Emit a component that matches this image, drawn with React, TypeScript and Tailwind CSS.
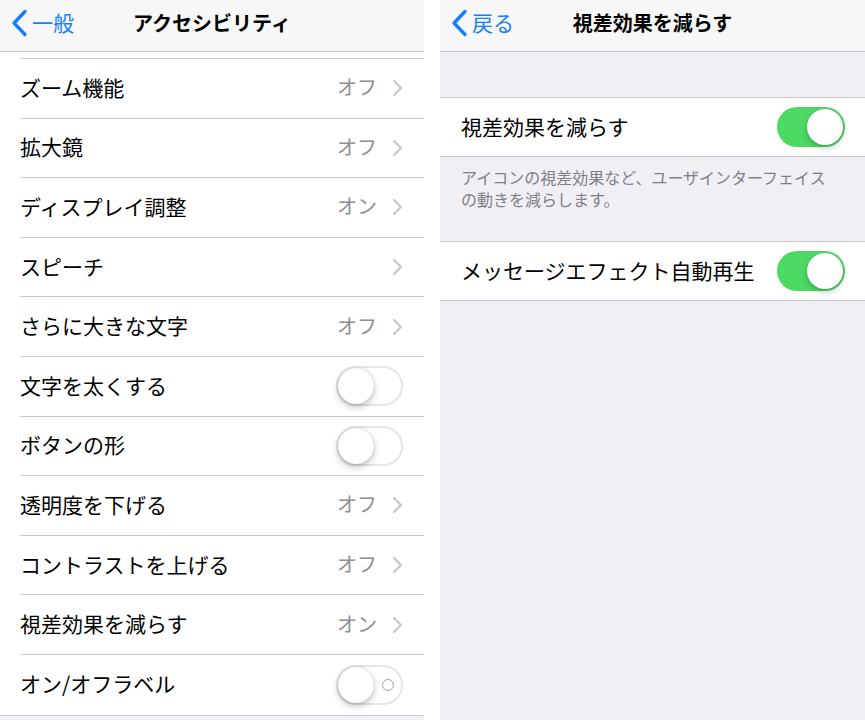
const font = { fontFamily: '"Noto Sans CJK JP", "Noto Sans", sans-serif' }

type Row = { label: string; value?: string; chevron?: boolean; toggle?: 'off' | 'off-label' }

const rows: Row[] = [
  { label: 'ズーム機能', value: 'オフ', chevron: true },
  { label: '拡大鏡', value: 'オフ', chevron: true },
  { label: 'ディスプレイ調整', value: 'オン', chevron: true },
  { label: 'スピーチ', chevron: true },
  { label: 'さらに大きな文字', value: 'オフ', chevron: true },
  { label: '文字を太くする', toggle: 'off' },
  { label: 'ボタンの形', toggle: 'off' },
  { label: '透明度を下げる', value: 'オフ', chevron: true },
  { label: 'コントラストを上げる', value: 'オフ', chevron: true },
  { label: '視差効果を減らす', value: 'オン', chevron: true },
  { label: 'オン/オフラベル', toggle: 'off-label' },
]

function BackChevron() {
  return (
    <svg width="17" height="28" viewBox="0 0 17 28" fill="none">
      <path d="M14 2.5 L3 14 L14 25.5" stroke="#147efb" strokeWidth="3.4" strokeLinecap="round" strokeLinejoin="round" />
    </svg>
  )
}

function Chevron() {
  return (
    <svg width="11" height="18" viewBox="0 0 11 18" fill="none">
      <path d="M2 2 L9 9 L2 16" stroke="#c7c7cc" strokeWidth="2.2" strokeLinecap="round" strokeLinejoin="round" />
    </svg>
  )
}

function Toggle({ on, label }: { on?: boolean; label?: boolean }) {
  if (on) {
    return (
      <div className="relative h-[40px] w-[68px] rounded-full bg-[#4cd964]">
        <div className="absolute right-[2px] top-[2px] h-[36px] w-[36px] rounded-full bg-white shadow-[0_3px_6px_rgba(0,0,0,0.22),0_0_1px_rgba(0,0,0,0.2)]" />
      </div>
    )
  }
  return (
    <div className="relative h-[40px] w-[67px] rounded-full border-[2px] border-[#e5e5ea] bg-white">
      <div className="absolute left-0 top-0 h-[36px] w-[36px] rounded-full bg-white shadow-[0_3px_7px_rgba(0,0,0,0.25),0_0_1px_rgba(0,0,0,0.3)]" />
      {label && <div className="absolute right-[7px] top-[12px] h-[12px] w-[12px] rounded-full border-[1.5px] border-[#a0a0a4]" />}
    </div>
  )
}

function NavBar({ back, title }: { back: string; title: string }) {
  return (
    <div className="relative flex h-[52px] items-center border-b border-[#c8c7cc] bg-[#f7f7f7] pb-[6px]">
      <div className="flex items-center gap-[4px] pl-[11px]">
        <BackChevron />
        <span className="text-[21px] leading-none text-[#147efb]">{back}</span>
      </div>
      <div className="absolute inset-x-0 top-0 flex h-[46px] items-center justify-center">
        <span className="text-[20px] font-bold leading-none text-black">{title}</span>
      </div>
    </div>
  )
}

export default function App() {
  return (
    <div className="flex h-[720px] w-[865px] overflow-hidden bg-white" style={font}>
      <section className="flex w-[424px] flex-col bg-[#efeff4]">
        <NavBar back="一般" title="アクセシビリティ" />
        <div className="bg-white pl-[20px] pt-[6px]">
          <div className="border-t border-[#c8c7cc]" />
          {rows.map((r, i) => (
            <div
              key={r.label}
              className={`flex h-[59.6px] items-center justify-between pr-[21px] ${i === rows.length - 1 ? '' : 'border-b border-[#c8c7cc]'}`}
            >
              <span className="relative -top-[1px] text-[21px] leading-none text-black">{r.label}</span>
              <div className="flex items-center">
                {r.value && <span className="relative -top-[1px] text-[20px] leading-none text-[#8e8e93]">{r.value}</span>}
                {r.chevron && <span className="ml-[15px] flex"><Chevron /></span>}
                {r.toggle && <Toggle label={r.toggle === 'off-label'} />}
              </div>
            </div>
          ))}
        </div>
        <div className="border-t border-[#c8c7cc]" />
      </section>

      <div className="w-[16px] bg-white" />

      <section className="flex flex-1 flex-col bg-[#efeff4]">
        <NavBar back="戻る" title="視差効果を減らす" />
        <div className="h-[45px]" />
        <div className="flex h-[60px] items-center justify-between border-y border-[#c8c7cc] bg-white pl-[21px] pr-[20px]">
          <span className="relative -top-[1px] text-[21px] leading-none text-black">視差効果を減らす</span>
          <Toggle on />
        </div>
        <div className="h-[84px] px-[21px] pt-[9px] text-[16px] leading-[22px] text-[#808086]">
          <p>アイコンの視差効果など、ユーザインターフェイス</p>
          <p>の動きを減らします。</p>
        </div>
        <div className="flex h-[60px] items-center justify-between border-y border-[#c8c7cc] bg-white pl-[21px] pr-[20px]">
          <span className="relative -top-[1px] text-[21px] leading-none text-black">メッセージエフェクト自動再生</span>
          <Toggle on />
        </div>
      </section>
    </div>
  )
}
